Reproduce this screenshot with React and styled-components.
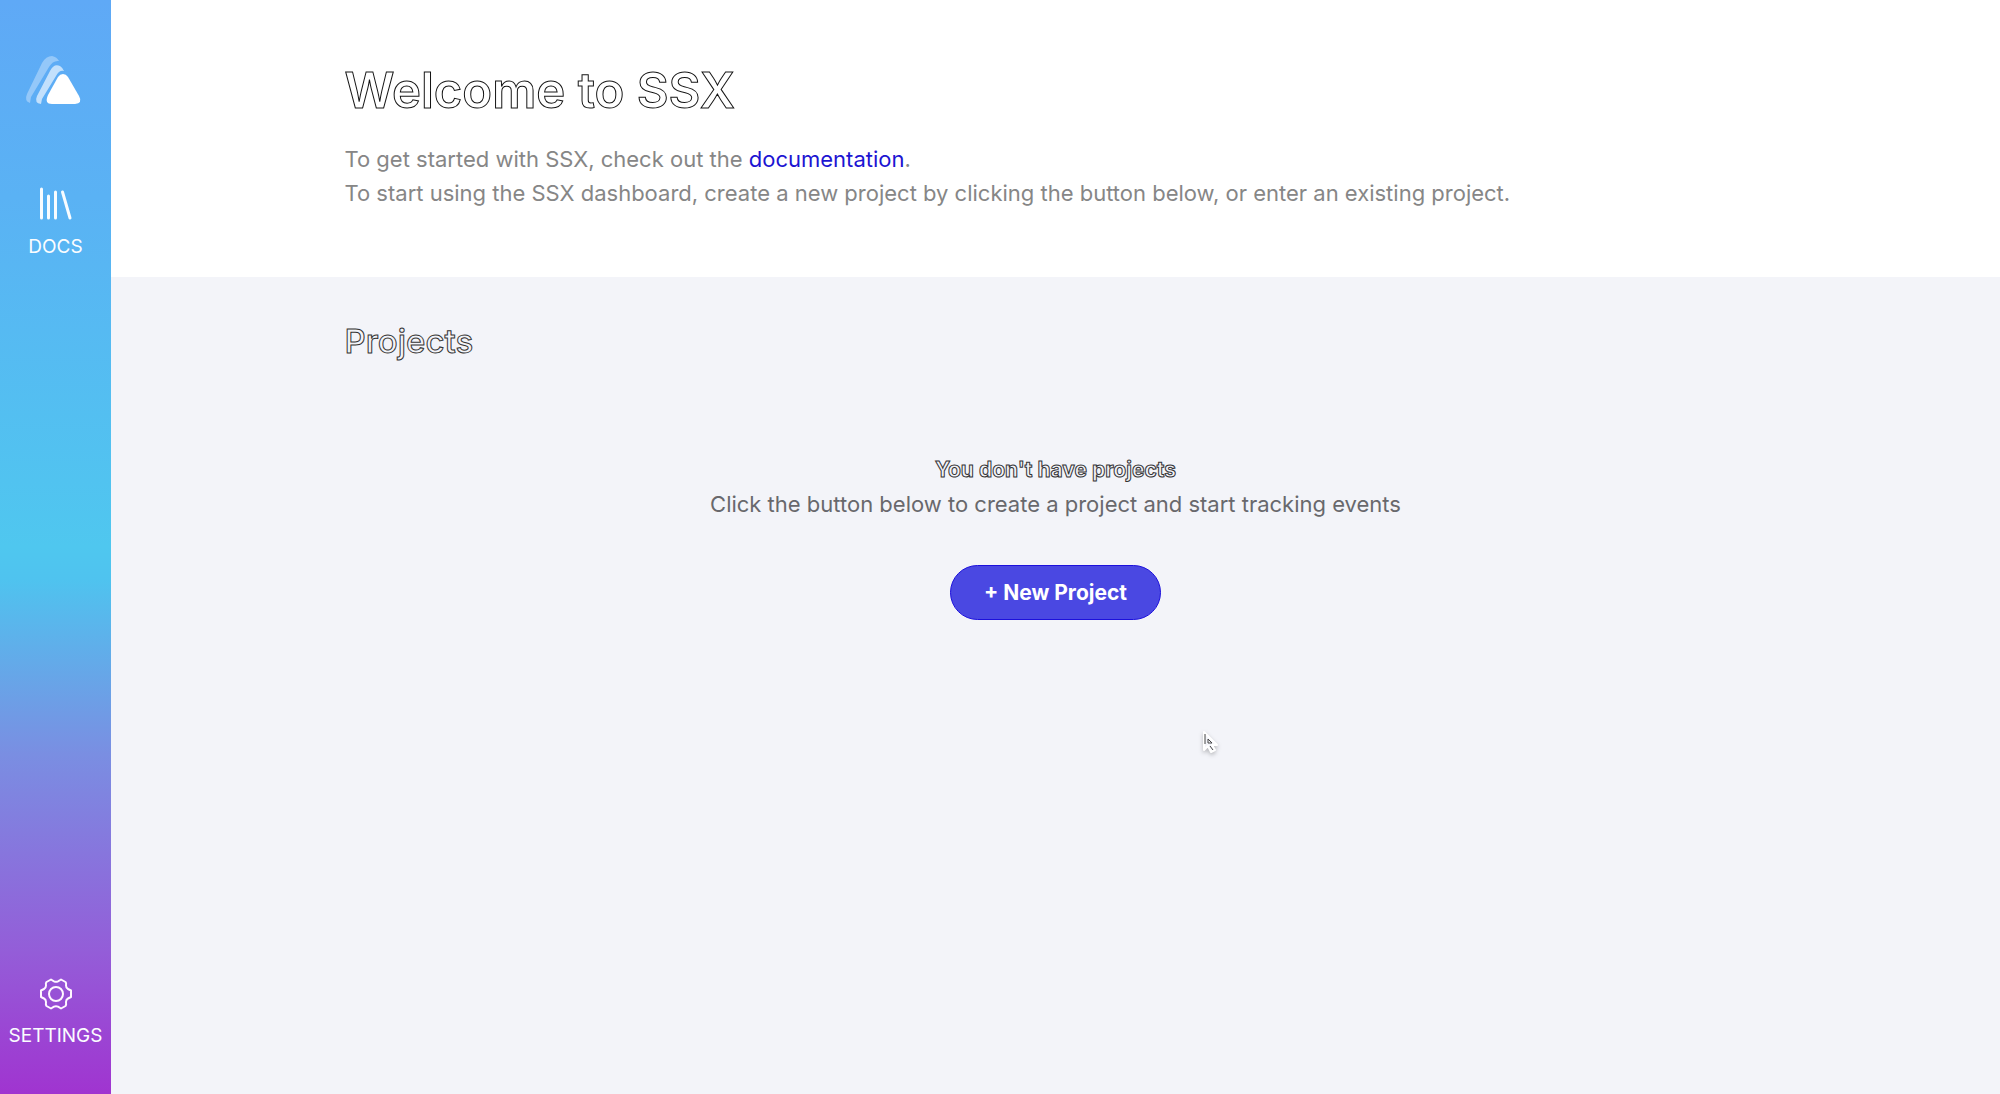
import React from 'react';
import styled, { createGlobalStyle } from 'styled-components';

const GlobalStyle = createGlobalStyle`
  *, *::before, *::after { box-sizing: border-box; }
  body {
    margin: 0;
    background: #f3f4f9;
    font-family: Inter, "Liberation Sans", sans-serif;
  }
`;

const Shell = styled.div`
  display: flex;
  min-height: 100vh;
`;

const Sidebar = styled.nav`
  flex: none;
  display: flex;
  flex-direction: column;
  align-items: center;
  width: 111px;
  padding: 56px 0 46px;
  background: linear-gradient(180deg, #5fa9f6 0%, #5ab2f4 18%, #4fc7ef 50%, #4fc3ef 53%, #7a8ee2 69%, #945dd8 87%, #a034d0 100%);
`;

const LogoLink = styled.a`
  display: flex;
  width: 56px;
  height: 49px;
`;

const NavLink = styled.a`
  display: flex;
  flex-direction: column;
  align-items: center;
  gap: 14px;
  margin-top: ${(p) => (p.$last ? 'auto' : '82px')};
  color: #fbfdff;
  font-size: 19px;
  line-height: 24px;
  text-decoration: none;
`;

const Main = styled.main`
  flex: 1;
  min-width: 0;
`;

const Container = styled.div`
  max-width: 1422px;
  margin: 0 auto;
`;

const Welcome = styled.header`
  padding: 59px 0 67px;
  background: #ffffff;
`;

const Title = styled.h1`
  margin: 0 0 20px;
  color: #ffffff;
  font-size: 49px;
  font-weight: 600;
  line-height: 63px;
  -webkit-text-stroke: 1px #111111;
`;

const Text = styled.p`
  margin: 0;
  color: ${(p) => (p.$dark ? '#68686c' : '#868686')};
  font-size: 22px;
  line-height: 34px;
`;

const EmptyTitle = styled.h3`
  margin: 0;
  color: #f3f4f9;
  font-size: 21px;
  font-weight: 700;
  line-height: 34px;
  -webkit-text-stroke: 1px #333336;
`;

const DocLink = styled.a`
  color: #1c14d2;
  text-decoration: none;
`;

const Projects = styled.section`
  padding: 43px 0;
`;

const SectionTitle = styled.h2`
  margin: 0;
  color: #f3f4f9;
  font-size: 33px;
  font-weight: 500;
  line-height: 42px;
  -webkit-text-stroke: 1px #333333;
`;

const Empty = styled.div`
  display: flex;
  flex-direction: column;
  align-items: center;
  padding-top: 91px;
`;

const NewButton = styled.button`
  height: 55px;
  margin-top: 44px;
  padding: 0 33px;
  border: 1px solid #1c10dc;
  border-radius: 28px;
  background: #4a48e2;
  color: #ffffff;
  font: 700 21px Inter, "Liberation Sans", sans-serif;
`;

const Pointer = styled.svg`
  position: absolute;
  left: 1201px;
  top: 730px;
  filter: drop-shadow(0 2px 2px rgba(0, 0, 0, 0.25));
`;

function Logo() {
  return (
    <svg width="56" height="49" viewBox="0 0 56 49" overflow="visible">
      <path d="M35 18Q32 18 30 21L20 39Q16 48 24 48H47Q55 47 51 40L40 21Q38 18 35 18Z" fill="#ffffff" />
      <path d="M36 15Q31 14 28 20L14 43L13 48Q6 47 9 40L22 15Q26 7 32 10Q35 12 36 15Z" fill="#c2e0fc" />
      <path d="M31 5Q25 4 21 11L3 41L2 47Q-4 45 -1 38L14 7Q18 0 24 0Q29 1 31 5Z" fill="#94c8f9" />
    </svg>
  );
}

function DocsIcon() {
  return (
    <svg width="32" height="34" viewBox="0 0 32 34" fill="none" stroke="#f8fcff" strokeWidth="3" strokeLinecap="round">
      <path d="M1.500 2V31M8.500 9V31M15.500 5V31M22.500 5L30 31" />
    </svg>
  );
}

function GearIcon() {
  return (
    <svg width="32" height="32" viewBox="0 0 32 32" fill="none" stroke="#fff8ff" strokeWidth="2" strokeLinejoin="round">
      <path d="M11 1.500L14 3.300Q16 4.200 18 3.300L21 1.500L25.500 4Q26.500 5 26 7.500Q26 10 28 11L31 12.500V19L28 20.500Q26 21.500 26 24Q26.500 27 25.500 28L21 30.500L18 28.700Q16 27.800 14 28.700L11 30.500L6.500 28Q5.500 27 6 24Q6 21.500 4 20.500L1 19V12.500L4 11Q6 10 6 7.500Q5.500 5 6.500 4Z" />
      <circle cx="16" cy="16" r="7" />
    </svg>
  );
}

export default function App() {
  return (
    <>
      <GlobalStyle />
      <Shell>
        <Sidebar>
          <LogoLink href="#" aria-label="SSX">
            <Logo />
          </LogoLink>
          <NavLink href="#docs">
            <DocsIcon />
            DOCS
          </NavLink>
          <NavLink href="#settings" $last>
            <GearIcon />
            SETTINGS
          </NavLink>
        </Sidebar>
        <Main>
          <Welcome>
            <Container>
              <Title>Welcome to SSX</Title>
              <Text>
                To get started with SSX, check out the <DocLink href="#documentation">documentation</DocLink>.
              </Text>
              <Text>
                To start using the SSX dashboard, create a new project by clicking the button below, or enter an existing project.
              </Text>
            </Container>
          </Welcome>
          <Projects>
            <Container>
              <SectionTitle>Projects</SectionTitle>
              <Empty>
                <EmptyTitle>You don't have projects</EmptyTitle>
                <Text $dark>Click the button below to create a project and start tracking events</Text>
                <NewButton type="button">+ New Project</NewButton>
              </Empty>
            </Container>
          </Projects>
        </Main>
      </Shell>
      <Pointer width="20" height="28" viewBox="0 0 20 28" aria-hidden="true">
        <path d="M3 2V20L7 16L10 22L14 20L11 15H16Z" fill="#f3f4f9" stroke="#ffffff" strokeWidth="2" strokeLinejoin="round" />
        <path d="M4 4V14M7 9V13H11L7 9M9 16L12 20" fill="none" stroke="#444444" strokeWidth="1" />
      </Pointer>
    </>
  );
}
